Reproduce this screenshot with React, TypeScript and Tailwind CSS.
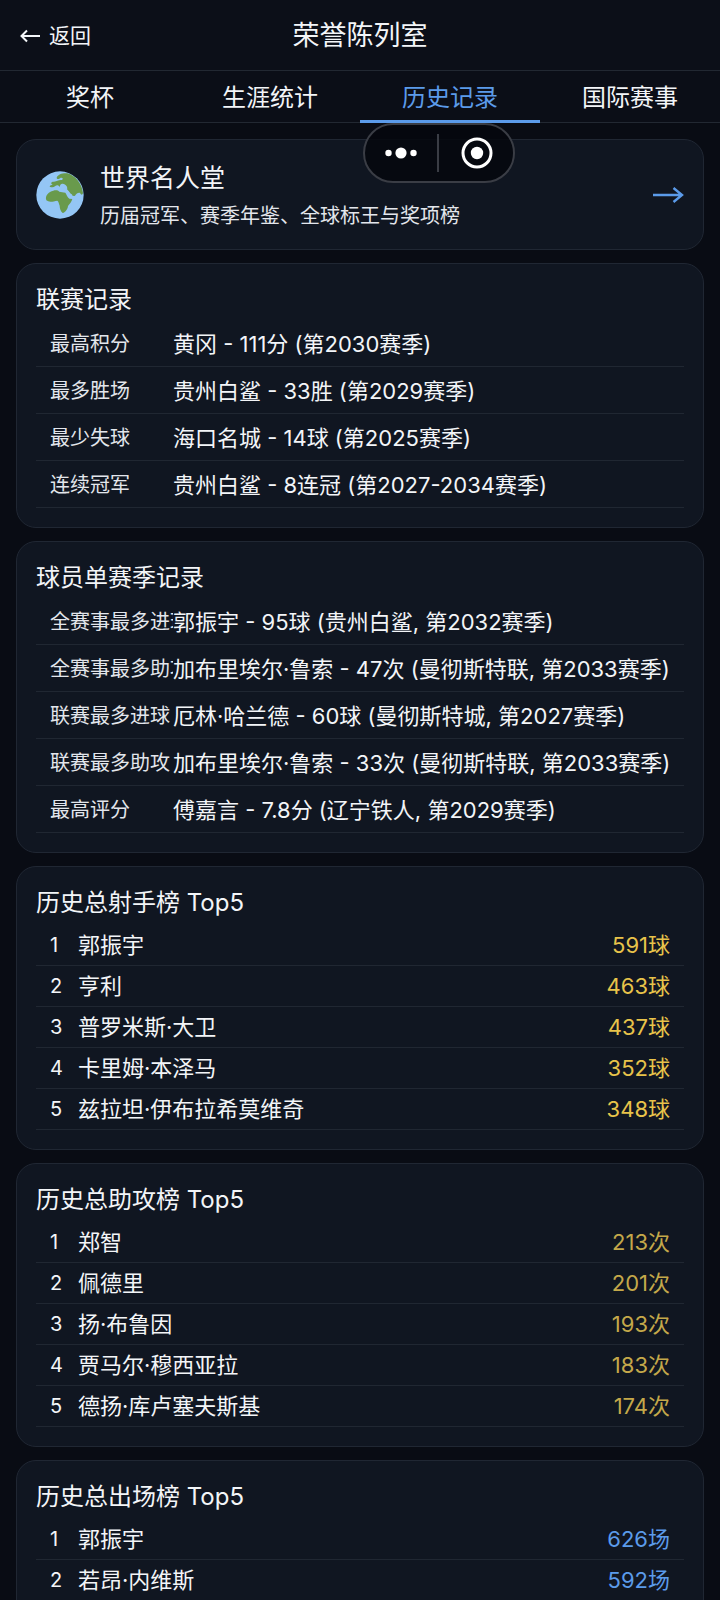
import { useState } from "react";

const tabs = ["奖杯", "生涯统计", "历史记录", "国际赛事"];

const leagueRecords = [
  { label: "最高积分", value: "黄冈 - 111分 (第2030赛季)" },
  { label: "最多胜场", value: "贵州白鲨 - 33胜 (第2029赛季)" },
  { label: "最少失球", value: "海口名城 - 14球 (第2025赛季)" },
  { label: "连续冠军", value: "贵州白鲨 - 8连冠 (第2027-2034赛季)" },
];

const playerRecords = [
  { label: "全赛事最多进球", value: "郭振宇 - 95球 (贵州白鲨, 第2032赛季)" },
  { label: "全赛事最多助攻", value: "加布里埃尔·鲁索 - 47次 (曼彻斯特联, 第2033赛季)" },
  { label: "联赛最多进球", value: "厄林·哈兰德 - 60球 (曼彻斯特城, 第2027赛季)" },
  { label: "联赛最多助攻", value: "加布里埃尔·鲁索 - 33次 (曼彻斯特联, 第2033赛季)" },
  { label: "最高评分", value: "傅嘉言 - 7.8分 (辽宁铁人, 第2029赛季)" },
];

const scorers = [
  { name: "郭振宇", total: "591球" },
  { name: "亨利", total: "463球" },
  { name: "普罗米斯·大卫", total: "437球" },
  { name: "卡里姆·本泽马", total: "352球" },
  { name: "兹拉坦·伊布拉希莫维奇", total: "348球" },
];

const assisters = [
  { name: "郑智", total: "213次" },
  { name: "佩德里", total: "201次" },
  { name: "扬·布鲁因", total: "193次" },
  { name: "贾马尔·穆西亚拉", total: "183次" },
  { name: "德扬·库卢塞夫斯基", total: "174次" },
];

const appearances = [
  { name: "郭振宇", total: "626场" },
  { name: "若昂·内维斯", total: "592场" },
];

type Entry = { label: string; value: string };
type Rank = { name: string; total: string };

function RecordCard({ title, records }: { title: string; records: Entry[] }) {
  return (
    <section className="rounded-[20px] border border-[#202733] bg-[#101621] px-[19px] pt-5 pb-[19px]">
      <h2 className="mb-1 text-[24px] leading-8">{title}</h2>
      <dl>
        {records.map((r) => (
          <div
            key={r.label}
            className="flex h-[47px] items-center border-b border-[#202732] px-3.5 pt-0.5 whitespace-nowrap"
          >
            <dt className="w-[123px] shrink-0 overflow-hidden text-[20px] leading-7 text-[#e3e6ec]">
              {r.label}
            </dt>
            <dd className="text-[22px] leading-8">{r.value}</dd>
          </div>
        ))}
      </dl>
    </section>
  );
}

function RankCard({ title, ranks, color }: { title: string; ranks: Rank[]; color: string }) {
  return (
    <section className="rounded-[20px] border border-[#202733] bg-[#101621] px-[19px] pt-5 pb-[19px]">
      <h2 className="mb-1.5 text-[24px] leading-8">{title}</h2>
      <ol>
        {ranks.map((r, i) => (
          <li
            key={r.name}
            className="flex h-[41px] items-center border-b border-[#202732] px-3.5 text-[22px] leading-8"
          >
            <span className="w-7 text-[20px]">{i + 1}</span>
            <span className="flex-1">{r.name}</span>
            <span className={color}>{r.total}</span>
          </li>
        ))}
      </ol>
    </section>
  );
}

function Globe() {
  return (
    <svg viewBox="0 0 144 144" className="size-12 shrink-0" aria-hidden="true">
      <circle cx="72" cy="72" r="71" fill="#94c6f5" />
      {/* Africa */}
      <path
        fill="#699a4c"
        d="M31 88C26 73 38 63 52 59C60 57 66 58 70 62C76 64 81 63 88 65C92 71 94 78 100 83L109 84C107 93 100 99 96 105C95 114 89 124 80 126C73 120 71 111 71 104C68 98 69 92 64 89C52 91 39 95 31 88Z"
      />
      {/* Europe and Asia */}
      <path
        fill="#699a4c"
        d="M62 20C66 10 79 6 94 7C118 14 137 36 141 66C139 73 136 72 132 66C127 64 121 68 117 74C110 78 104 70 97 61C91 58 96 53 92 46C88 40 82 36 76 39C70 42 74 47 70 47C66 41 61 43 57 46C52 50 47 49 41 47C41 42 48 44 50 40C42 38 46 31 54 32C63 31 66 27 75 27C83 26 82 20 74 20C68 26 62 24 62 20Z"
      />
      <path
        fill="none"
        stroke="#94c6f5"
        strokeWidth="5"
        strokeLinecap="round"
        d="M90 56C99 60 97 70 106 72"
      />
    </svg>
  );
}

export default function App() {
  const [active, setActive] = useState("历史记录");

  return (
    <div className="relative h-screen overflow-hidden bg-[#090c14] font-['Inter','Noto_Sans_CJK_SC',sans-serif] text-[#f3f5f8]">
      {/* Header */}
      <header className="grid h-[71px] grid-cols-[1fr_auto_1fr] items-center border-b border-[#222832] bg-[#0c0f18] px-5 pt-0.5">
        <button className="flex items-center gap-2 justify-self-start text-[21px] leading-8">
          <svg
            viewBox="0 0 21 14"
            className="h-3.5 w-[21px]"
            fill="none"
            stroke="currentColor"
            strokeWidth="2"
            aria-hidden="true"
          >
            <path d="M20 7H2M7 1.5L1.5 7L7 12.5" />
          </svg>
          返回
        </button>
        <h1 className="text-[27px] leading-10">荣誉陈列室</h1>
      </header>

      {/* Tabs */}
      <nav className="grid h-[52px] grid-cols-4 border-b border-[#222832] bg-[#0b0e17]">
        {tabs.map((tab) => (
          <button
            key={tab}
            onClick={() => setActive(tab)}
            className={
              tab === active
                ? "-mb-px border-b-3 border-[#5b9bea] pt-1 text-[24px] leading-8 text-[#5b9bea]"
                : "-mb-px border-b-3 border-transparent pt-1 text-[24px] leading-8"
            }
          >
            {tab}
          </button>
        ))}
      </nav>

      <main className="flex flex-col gap-[13px] px-4 pt-4">
        {/* Hall of fame */}
        <a
          href="#hall-of-fame"
          className="flex h-[111px] shrink-0 items-center gap-4 rounded-[20px] border border-[#202733] bg-[#101621] px-[19px]"
        >
          <Globe />
          <div className="flex-1 pt-0.5">
            <h2 className="text-[25px] leading-10">世界名人堂</h2>
            <p className="text-[20px] leading-9 text-[#e3e6ec]">历届冠军、赛季年鉴、全球标王与奖项榜</p>
          </div>
          <svg
            viewBox="0 0 32 18"
            className="h-[18px] w-8"
            fill="none"
            stroke="#5b9bea"
            strokeWidth="2.4"
            aria-hidden="true"
          >
            <path d="M1 9H30M21.5 2L30 9L21.5 16" />
          </svg>
        </a>

        <RecordCard title="联赛记录" records={leagueRecords} />
        <RecordCard title="球员单赛季记录" records={playerRecords} />
        <RankCard title="历史总射手榜 Top5" ranks={scorers} color="text-[#e8c34a]" />
        <RankCard title="历史总助攻榜 Top5" ranks={assisters} color="text-[#c4a84a]" />
        <RankCard title="历史总出场榜 Top5" ranks={appearances} color="text-[#5b9bea]" />
      </main>

      {/* Floating capsule */}
      <div className="absolute top-[123px] left-1/2 ml-[3px] flex h-[60px] w-[152px] items-center rounded-full border-2 border-[#3a3d45] bg-[#05070d]/85">
        <button aria-label="更多" className="flex flex-1 justify-center">
          <svg viewBox="0 0 32 12" className="h-3 w-8" fill="white" aria-hidden="true">
            <circle cx="3.5" cy="6" r="3.2" />
            <circle cx="16" cy="6" r="5.6" />
            <circle cx="28.5" cy="6" r="3.2" />
          </svg>
        </button>
        <span className="h-[38px] w-0.5 bg-[#3a3d45]" />
        <button aria-label="关闭" className="flex flex-1 justify-center pl-0.5">
          <svg viewBox="0 0 32 32" className="size-8" aria-hidden="true">
            <circle cx="16" cy="16" r="14" fill="none" stroke="white" strokeWidth="3" />
            <circle cx="16" cy="16" r="6.2" fill="white" />
          </svg>
        </button>
      </div>
    </div>
  );
}
